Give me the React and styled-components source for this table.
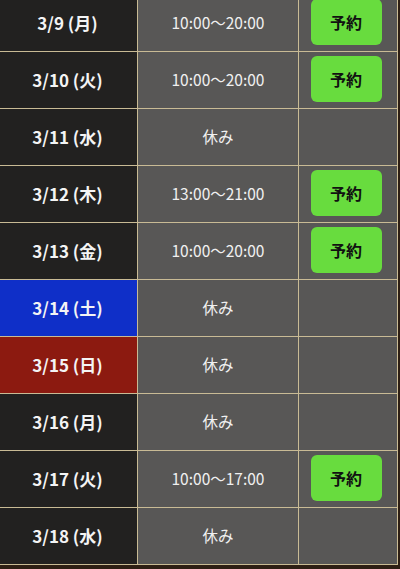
import React from "react";
import styled, { createGlobalStyle } from "styled-components";

const Global = createGlobalStyle`
  html, body { margin: 0; padding: 0; }
  body {
    background: #2e1f14;
    font-family: "Noto Sans CJK JP", "Noto Sans", sans-serif;
    overflow: hidden;
  }
`;

const Grid = styled.div`
  display: grid;
  grid-template-columns: 137px 160px 98px;
  gap: 1px;
  width: 397px;
  background: #c9bb95;
  border-bottom: 1px solid #c9bb95;
  border-right: 1px solid #c9bb95;
  margin-top: -5px;
`;

const dayBg = { normal: "#222120", sat: "#0f2fc8", sun: "#8c1a10" };

const DateCell = styled.div`
  height: 56px;
  display: flex;
  align-items: center;
  justify-content: center;
  background: ${(p) => dayBg[p.$kind]};
  color: #f4f4f4;
  font-weight: 700;
  font-size: 17px;
  padding: 0 2px 2px 0;
  box-sizing: border-box;
`;

const TimeCell = styled.div`
  height: 56px;
  display: flex;
  align-items: center;
  justify-content: center;
  background: #585756;
  color: #f0f0f0;
  font-size: 15.5px;
  padding-bottom: 2px;
  box-sizing: border-box;
`;

const ActionCell = styled.div`
  height: 56px;
  display: flex;
  align-items: center;
  justify-content: center;
  padding-right: 4px;
  box-sizing: border-box;
  background: #585756;
`;

const ReserveButton = styled.button`
  width: 71px;
  height: 46px;
  border: none;
  border-radius: 6px;
  background: #68dc3e;
  color: #111;
  font-family: "Noto Sans CJK JP", sans-serif;
  font-weight: 700;
  font-size: 16px;
  cursor: pointer;
  margin-top: -2px;
  padding: 0;
`;

const rows = [
  ["3/9 (月)", "normal", "10:00〜20:00", true],
  ["3/10 (火)", "normal", "10:00〜20:00", true],
  ["3/11 (水)", "normal", "休み", false],
  ["3/12 (木)", "normal", "13:00〜21:00", true],
  ["3/13 (金)", "normal", "10:00〜20:00", true],
  ["3/14 (土)", "sat", "休み", false],
  ["3/15 (日)", "sun", "休み", false],
  ["3/16 (月)", "normal", "休み", false],
  ["3/17 (火)", "normal", "10:00〜17:00", true],
  ["3/18 (水)", "normal", "休み", false],
];

export default function App() {
  return (
    <>
      <Global />
      <Grid>
        {rows.map(([d, k, t, r]) => (
          <React.Fragment key={d}>
            <DateCell $kind={k}>{d}</DateCell>
            <TimeCell>{t}</TimeCell>
            <ActionCell>{r && <ReserveButton>予約</ReserveButton>}</ActionCell>
          </React.Fragment>
        ))}
      </Grid>
    </>
  );
}
